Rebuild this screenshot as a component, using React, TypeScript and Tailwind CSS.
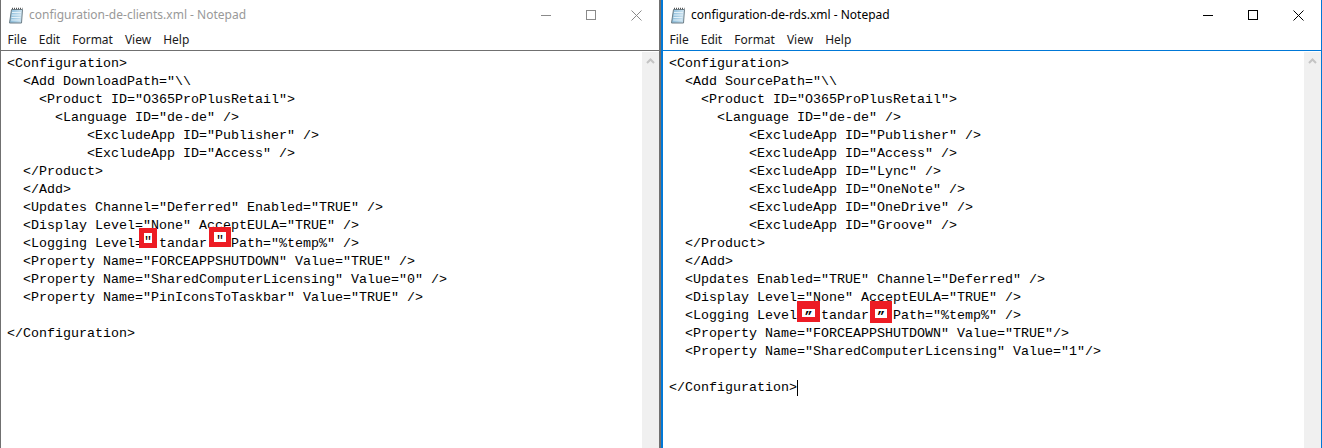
import { ReactNode } from "react";

const leftLines = [
  "<Configuration>",
  '  <Add DownloadPath="\\\\',
  '    <Product ID="O365ProPlusRetail">',
  '      <Language ID="de-de" />',
  '          <ExcludeApp ID="Publisher" />',
  '          <ExcludeApp ID="Access" />',
  "  </Product>",
  "  </Add>",
  '  <Updates Channel="Deferred" Enabled="TRUE" />',
  '  <Display Level="None" AcceptEULA="TRUE" />',
  "LOGGING",
  '  <Property Name="FORCEAPPSHUTDOWN" Value="TRUE" />',
  '  <Property Name="SharedComputerLicensing" Value="0" />',
  '  <Property Name="PinIconsToTaskbar" Value="TRUE" />',
  "",
  "</Configuration>",
];

const rightLines = [
  "<Configuration>",
  '  <Add SourcePath="\\\\',
  '    <Product ID="O365ProPlusRetail">',
  '      <Language ID="de-de" />',
  '          <ExcludeApp ID="Publisher" />',
  '          <ExcludeApp ID="Access" />',
  '          <ExcludeApp ID="Lync" />',
  '          <ExcludeApp ID="OneNote" />',
  '          <ExcludeApp ID="OneDrive" />',
  '          <ExcludeApp ID="Groove" />',
  "  </Product>",
  "  </Add>",
  '  <Updates Enabled="TRUE" Channel="Deferred" />',
  '  <Display Level="None" AcceptEULA="TRUE" />',
  "LOGGING",
  '  <Property Name="FORCEAPPSHUTDOWN" Value="TRUE"/>',
  '  <Property Name="SharedComputerLicensing" Value="1"/>',
  "",
];

function NotepadIcon({ id }: { id: string }) {
  return (
    <svg width="16" height="17" viewBox="0 0 16 17">
      <defs>
        <linearGradient id={id} x1="0" y1="0" x2="1" y2="0">
          <stop offset="0" stopColor="#86b9d8" />
          <stop offset="1" stopColor="#cfe5f2" />
        </linearGradient>
      </defs>
      <path d="M3.500 2.500 L14.500 2.500 L13.500 16 L1.500 16 Z" fill={`url(#${id})`} stroke="#6e7f88" strokeWidth="1" />
      <path d="M4 5.500 H13 M3.800 8 H13 M3.500 10.500 H12.500 M3.200 13 H12" stroke="#e4f1f8" strokeWidth="1" />
      <path d="M4 1.500 H14.500" stroke="#555555" strokeWidth="1.500" strokeDasharray="1 1" />
    </svg>
  );
}

// red box drawn over the quote, sits in a 2ch slot of the line
function RedBox({ glyph, className }: { glyph: string; className: string }) {
  return (
    <span className="relative inline-block h-[18px] w-[16px] align-top">
      <span className={`absolute flex justify-center border-[#ed1c24] bg-white ${className}`}>{glyph}</span>
    </span>
  );
}

function Notepad({
  title,
  lines,
  active,
  logging,
  caret,
}: {
  title: string;
  lines: string[];
  active?: boolean;
  logging: ReactNode;
  caret?: boolean;
}) {
  const lineColor = active ? "border-[#0078d7]" : "border-[#707070]";
  return (
    <div
      className={`flex h-[448px] flex-col bg-white ${lineColor} ${
        active ? "border-l-2 border-r" : "border-l border-r-2"
      }`}
    >
      <div className="flex h-[30px] items-center pl-[7px] font-['Noto_Sans',sans-serif] text-[12px]">
        <NotepadIcon id={active ? "page-active" : "page-idle"} />
        <span className={`ml-[5px] ${active ? "text-black" : "text-[#999999]"}`}>{title} - Notepad</span>
        <div className={`ml-auto flex items-center gap-[35px] pr-[17px] ${active ? "text-black" : "text-[#8a8a8a]"}`}>
          <svg width="10" height="10" viewBox="0 0 10 10">
            <path d="M0 5.500 H10" stroke="currentColor" />
          </svg>
          <svg width="10" height="10" viewBox="0 0 10 10">
            <rect x="0.500" y="0.500" width="9" height="9" fill="none" stroke="currentColor" />
          </svg>
          <svg width="11" height="11" viewBox="0 0 11 11">
            <path d="M0.500 0.500 L10.500 10.500 M10.500 0.500 L0.500 10.500" stroke="currentColor" />
          </svg>
        </div>
      </div>
      <div className="flex h-[20px] items-center gap-[12px] pl-[6.500px] font-['Noto_Sans',sans-serif] text-[12px] text-[#1a1a1a]">
        <span>File</span>
        <span>Edit</span>
        <span>Format</span>
        <span>View</span>
        <span>Help</span>
      </div>
      <div className={`flex min-h-0 flex-1 border-t ${lineColor}`}>
        <div className="flex-1 pl-[6px] pt-[4px] font-['Liberation_Mono',monospace] text-[13.33px] leading-[18px] text-black">
          {lines.map((line, i) => (
            <div key={i} className="h-[18px] whitespace-pre">
              {line === "LOGGING" ? logging : line}
            </div>
          ))}
          {caret && (
            <div className="h-[18px] whitespace-pre">
              {"</Configuration>"}
              <span className="mt-[1px] inline-block h-[16px] w-px align-top bg-black" />
            </div>
          )}
        </div>
        <div className="mt-[1px] flex w-[17px] justify-center bg-[#f0f0f0] pt-[6px]">
          <svg width="9" height="6" viewBox="0 0 9 6">
            <path d="M1 5 L4.500 1.500 L8 5" fill="none" stroke="#c4c4c4" strokeWidth="2" />
          </svg>
        </div>
      </div>
    </div>
  );
}

export default function App() {
  return (
    <div className="grid h-[448px] w-[1322px] grid-cols-[661px_661px] overflow-hidden bg-white">
      <Notepad
        title="configuration-de-clients.xml"
        lines={leftLines}
        logging={
          <>
            {"  <Logging Level="}
            <RedBox glyph={'"'} className="left-[-4px] top-[-7px] h-[20px] w-[18px] border-[5px] leading-[18px]" />
            {"tandar"}
            <RedBox glyph={'"'} className="left-[2px] top-[-8px] h-[20px] w-[22px] border-[5px] leading-[18px]" />
            {' Path="%temp%" />'}
          </>
        }
      />
      <Notepad
        title="configuration-de-rds.xml"
        lines={rightLines}
        active
        caret
        logging={
          <>
            {"  <Logging Level"}
            <span className="inline-block w-[8px]" />
            <RedBox
              glyph="”"
              className="left-[-8px] top-[-6px] h-[21px] w-[23px] border-[5px] border-t-[8px] font-bold leading-[16px]"
            />
            {"tandar"}
            <RedBox
              glyph="”"
              className="left-[1px] top-[-6px] h-[22px] w-[22px] border-[5px] border-t-[8px] font-bold leading-[16px]"
            />
            {' Path="%temp%" />'}
          </>
        }
      />
    </div>
  );
}
